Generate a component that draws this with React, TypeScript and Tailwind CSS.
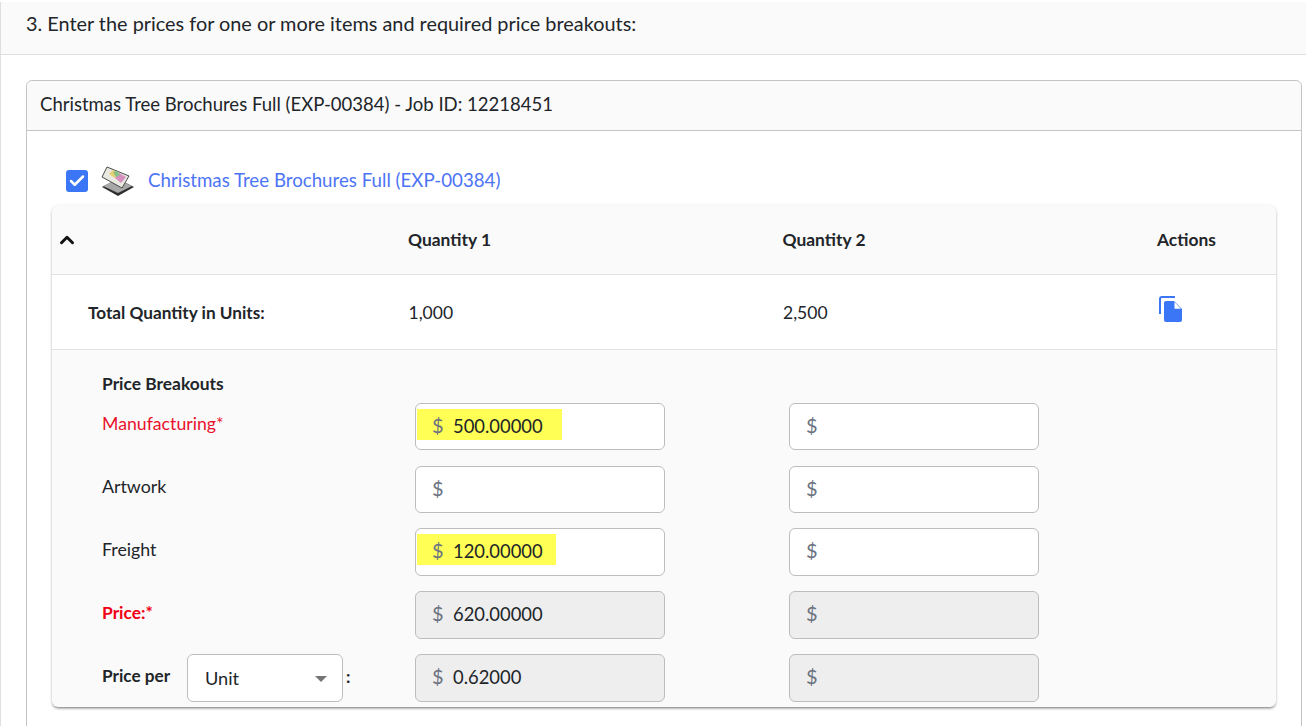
import { Check, ChevronUp } from "lucide-react";

function BrochureIcon() {
  return (
    <svg width="34" height="30" viewBox="0 0 34 30" className="shrink-0">
      <path d="M1 21 L17 13 L33 21 L17 30 Z" fill="#2e2e2e" />
      <path d="M2 20 L16 13 L31 20 L17 27 Z" fill="#a8a8a8" />
      <path d="M6 1 L28 10 L21 22 L1 11 Z" fill="#e9e9e2" stroke="#4a4a4a" strokeWidth="1" />
      <path d="M8 8 L12 4 L18 7 L14 12 Z" fill="#e8cf70" />
      <path d="M14 12 L18 7 L25 11 L20 17 Z" fill="#d78fc0" />
      <path d="M12 6 L16 5 L19 9 L15 11 Z" fill="#84c08a" />
    </svg>
  );
}

function CopyIcon() {
  return (
    <svg width="24" height="27" viewBox="0 0 24 27" className="text-[#3b76f6]">
      <path d="M1 18 V3 Q1 1 3 1 H16" fill="none" stroke="currentColor" strokeWidth="2" />
      <path d="M7 5 H15 L23 13 V24 Q23 26 21 26 H7 Q5 26 5 24 V7 Q5 5 7 5 Z" fill="currentColor" />
      <path d="M15.5 6 L22 12.8 H15.5 Z" fill="#ffffff" />
    </svg>
  );
}

function PriceInput({ value, mark, disabled, h }: { value?: string; mark?: string; disabled?: boolean; h: string }) {
  const box = disabled ? "bg-[#eeeeee]" : "bg-white";
  return (
    <div className={`w-[250px] rounded-md border border-[#bdbdbd] pl-[1px] pt-[5px] text-[#212529] ${h} ${box}`}>
      <div className={`flex h-[31px] items-center pl-[15px] ${mark ? `bg-[#ffff55] ${mark}` : ""}`}>
        <span className="w-[21px] text-[20px] text-[#6b7280]">$</span>
        <span className="pt-[5px] text-[18.4px]">{value}</span>
      </div>
    </div>
  );
}

const rows = [
  { label: "Manufacturing*", cls: "pt-[8px] text-[#e8112d] text-[17.7px]", value: "500.00000", mark: "w-[145px]", h: "h-[47px]", row: "mb-[16px]" },
  { label: "Artwork", cls: "pt-[7px] text-[#212529] text-[17.8px]", h: "h-[47px]", row: "mb-[15px]" },
  { label: "Freight", cls: "pt-[8px] text-[#212529] text-[17.8px]", value: "120.00000", mark: "w-[139px]", h: "h-[48px]", row: "mb-[15px]" },
  { label: "Price:*", cls: "pt-[9px] text-[#f00014] font-bold text-[17.4px]", value: "620.00000", disabled: true, h: "h-[48px]", row: "mb-[15px]" },
];

export default function App() {
  return (
    <div
      className="h-[726px] w-[1306px] overflow-hidden bg-white pt-[2px] text-[#212529]"
      style={{ fontFamily: "Lato, sans-serif" }}
    >
      <div className="flex h-[53px] items-center border-b border-l border-[#dfdfdf] bg-[#fafafa] pl-[25px] pb-[9px] text-[19.87px]">
        3. Enter the prices for one or more items and required price breakouts:
      </div>
      <div className="border-l border-[#dfdfdf] pl-[25px] pt-[25px]">
        <div className="h-[700px] w-[1276px] rounded-t-md border border-[#c4c4c4]">
          <div className="flex h-[50px] items-center rounded-t-md border-b border-[#c4c4c4] bg-[#fafafa] pb-[2px] pl-[13px] text-[18.54px]">
            Christmas Tree Brochures Full (EXP-00384) - Job ID: 12218451
          </div>
          <div className="pl-[25px]">
            <div className="flex h-[75px] items-center gap-[13px] pl-[14px] pt-[24px]">
              <span className="flex h-[22px] w-[22px] items-center justify-center rounded-[3px] bg-[#3b76f6]">
                <Check size={18} strokeWidth={3.4} className="text-white" />
              </span>
              <BrochureIcon />
              <span className="text-[18.69px] text-[#4d74f5]">Christmas Tree Brochures Full (EXP-00384)</span>
            </div>
            <div className="w-[1224px] rounded-md bg-[#fafafa] shadow-[0_2px_3px_-1px_rgba(0,0,0,0.55),0_0_4px_rgba(0,0,0,0.08)]">
              <div className="grid h-[69px] grid-cols-[356px_374.5px_374.5px_1fr] items-center border-b border-[#e2e2e2] text-[17.4px] font-bold">
                <div className="pl-[4px]">
                  <ChevronUp size={22} strokeWidth={3.2} className="text-[#111]" />
                </div>
                <div>Quantity 1</div>
                <div>Quantity 2</div>
                <div>Actions</div>
              </div>
              <div className="grid h-[75px] grid-cols-[356px_374.5px_374.5px_1fr] items-center border-b border-[#e2e2e2] bg-white pt-[2px] text-[17.5px]">
                <div className="pl-[36px] text-[17.2px] font-bold">Total Quantity in Units:</div>
                <div className="pl-[0.5px]">1,000</div>
                <div className="pl-[0.5px]">2,500</div>
                <div className="pb-[7px] pl-[2px]">
                  <CopyIcon />
                </div>
              </div>
              <div className="pb-[5px] pl-[50px] pt-[21px] text-[17.2px]">
                <div className="h-[32px] text-[17.4px] font-bold">Price Breakouts</div>
                <div className="flex flex-col">
                  {rows.map((r) => (
                    <div key={r.label} className={`flex items-start ${r.row}`}>
                      <div className={`w-[313px] ${r.cls}`}>{r.label}</div>
                      <div className="w-[374px]">
                        <PriceInput value={r.value} mark={r.mark} disabled={r.disabled} h={r.h} />
                      </div>
                      <PriceInput disabled={r.disabled} h={r.h} />
                    </div>
                  ))}
                  <div className="flex items-start">
                    <div className="flex w-[313px] items-center">
                      <span className="w-[85px] pb-[5px] font-bold">Price per</span>
                      <div className="flex h-[48px] w-[156px] items-center justify-between rounded-md border border-[#bdbdbd] bg-white pl-[17px] pr-[15px] pt-[2px] text-[18.2px] text-[#212529]">
                        Unit
                        <span className="h-0 w-0 border-x-[6px] border-t-[6px] border-x-transparent border-t-[#757575]" />
                      </div>
                      <span className="pb-[2px] pl-[3px] font-bold">:</span>
                    </div>
                    <div className="w-[374px]">
                      <PriceInput value="0.62000" disabled h="h-[48px]" />
                    </div>
                    <PriceInput disabled h="h-[48px]" />
                  </div>
                </div>
              </div>
            </div>
          </div>
        </div>
      </div>
    </div>
  );
}
